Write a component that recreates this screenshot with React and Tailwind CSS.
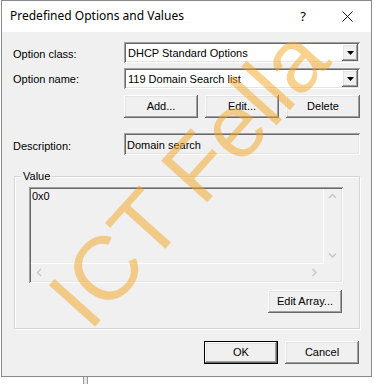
import React from "react";

const raised =
  "bg-[#f0f0f0] shadow-[inset_-1px_-1px_0_#696969,inset_1px_1px_0_#ffffff,inset_-2px_-2px_0_#a0a0a0,inset_2px_2px_0_#e3e3e3]";
const sunken =
  "shadow-[inset_1px_1px_0_#a0a0a0,inset_-1px_-1px_0_#ffffff,inset_2px_2px_0_#696969,inset_-2px_-2px_0_#e3e3e3]";

function Btn({ children, className = "", isDefault = false }) {
  if (isDefault) {
    return (
      <div className={"w-[74px] h-[23px] border border-black " + className}>
        <div className={"w-full h-full flex items-center justify-center " + raised}>
          {children}
        </div>
      </div>
    );
  }
  return (
    <div className={"w-[74px] h-[23px] flex items-center justify-center " + raised + " " + className}>
      {children}
    </div>
  );
}

function Combo({ text }) {
  return (
    <div className={"w-[236px] h-[21px] bg-white flex items-center pl-[4px] pr-[2px] " + sunken}>
      <span className="flex-1 pt-[1px]">{text}</span>
      <div className={"w-[16px] h-[17px] flex items-center justify-center " + raised}>
        <svg width="7" height="4" viewBox="0 0 7 4">
          <path d="M0 0H7L3.5 4Z" fill="#000" />
        </svg>
      </div>
    </div>
  );
}

function Chevron({ dir }) {
  const paths = {
    up: "M1 5L4.5 1.5L8 5",
    down: "M1 1.5L4.5 5L8 1.5",
    left: "M5 1L1.5 4.5L5 8",
    right: "M1.5 1L5 4.5L1.5 8",
  };
  const vertical = dir === "up" || dir === "down";
  return (
    <svg width={vertical ? 9 : 7} height={vertical ? 7 : 9} viewBox={vertical ? "0 0 9 7" : "0 0 7 9"}>
      <path d={paths[dir]} fill="none" stroke="#c4c4c4" strokeWidth="1.3" />
    </svg>
  );
}

export default function App() {
  return (
    <div
      className="relative w-[374px] h-[384px] bg-white overflow-hidden text-[11px] text-black"
      style={{ fontFamily: '"Liberation Sans", Arial, sans-serif' }}
    >
      <div className="ml-px w-[371px] h-[377px] border border-[#8a8a8a] flex flex-col">
        {/* Title bar */}
        <div className="h-[31px] bg-white flex items-center pl-[8px] shrink-0">
          <span
            className="text-[12px] flex-1 pb-[1px]"
            style={{ fontFamily: '"Noto Sans", "Open Sans", sans-serif' }}
          >
            Predefined Options and Values
          </span>
          <span
            className="text-[13px] w-[10px] text-center mr-[34px]"
            style={{ fontFamily: '"Noto Sans", "Open Sans", sans-serif' }}
          >
            ?
          </span>
          <svg width="11" height="11" viewBox="0 0 11 11" className="mr-[18px]">
            <path d="M0.5 0.5L10.5 10.5M10.5 0.5L0.5 10.5" stroke="#111" strokeWidth="1" />
          </svg>
        </div>

        {/* Body */}
        <div className="flex-1 bg-[#f0f0f0] flex flex-col">
          <div className="mt-[10px] flex items-center pl-[11px]">
            <span className="w-[111px] pt-[3px]">Option class:</span>
            <Combo text="DHCP Standard Options" />
          </div>
          <div className="mt-[5px] flex items-center pl-[11px]">
            <span className="w-[111px] pt-[2px]">Option name:</span>
            <Combo text="119 Domain Search list" />
          </div>
          <div className="mt-[6px] flex pl-[122px] gap-[7px]">
            <Btn>Add...</Btn>
            <Btn>Edit...</Btn>
            <Btn>Delete</Btn>
          </div>
          <div className="mt-[15px] flex items-start pl-[11px]">
            <span className="w-[111px] pt-[5px]">Description:</span>
            <div className={"w-[236px] h-[22px] bg-[#f0f0f0] pl-[3px] pt-[4px] " + sunken}>
              Domain search
            </div>
          </div>

          {/* Group box */}
          <div className="mt-[21px] ml-[12px] w-[346px] h-[153px] relative border border-[#d5d5d5] shadow-[1px_1px_0_#ffffff,inset_1px_1px_0_#ffffff] flex flex-col">
            <span className="absolute left-[6px] top-[-7px] px-[2px] bg-[#f0f0f0] leading-[13px]">
              Value
            </span>
            <div className={"mt-[10px] ml-[14px] w-[314px] h-[96px] p-[2px] flex flex-col " + sunken}>
              <div className="flex flex-1">
                <div className="flex-1 border-r border-b border-white pl-[1px] pt-[1px] leading-[13px]">
                  0x0
                </div>
                <div className="w-[17px] flex flex-col items-center justify-between pt-[4px] pb-[5px]">
                  <Chevron dir="up" />
                  <Chevron dir="down" />
                </div>
              </div>
              <div className="h-[17px] flex">
                <div className="flex-1 flex items-center justify-between pl-[5px] pr-[6px]">
                  <Chevron dir="left" />
                  <Chevron dir="right" />
                </div>
                <div className="w-[17px]" />
              </div>
            </div>
            <div className="mt-[7px] ml-[253px]">
              <Btn>Edit Array...</Btn>
            </div>
          </div>

          <div className="mt-[12px] flex pl-[202px] gap-[7px]">
            <Btn isDefault>OK</Btn>
            <Btn>Cancel</Btn>
          </div>
        </div>
      </div>
      <div className="ml-[83px] w-[5px] h-[7px] border-x border-[#9a9a9a] bg-[#e8e8e8]" />

      {/* Watermark overlay */}
      <span
        className="absolute left-[33px] top-[282px] origin-top-left rotate-[-48deg] text-[90px] leading-none whitespace-nowrap text-[#f5a623] opacity-50 pointer-events-none"
        style={{ fontFamily: '"Liberation Sans", Arial, sans-serif' }}
      >
        ICT Fella
      </span>
    </div>
  );
}
